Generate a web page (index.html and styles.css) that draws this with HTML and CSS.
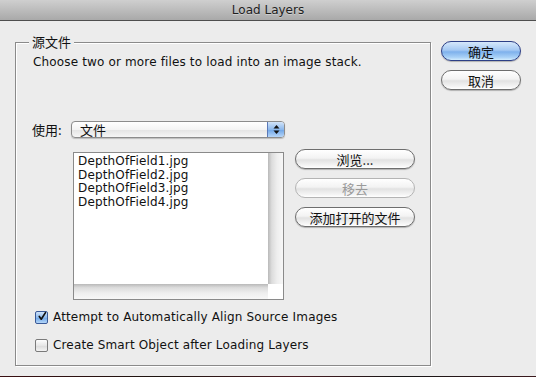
FILE: index.html
```html
<!DOCTYPE html>
<html lang="zh">
<head>
    <meta charset="UTF-8">
    <title>Load Layers</title>
    <link rel="stylesheet" href="styles.css">
</head>
<body>
    <div class="window">
        <div class="titlebar">Load Layers</div>
        <div class="dialog">
            <div class="group">
                <span class="group-title">源文件</span>
                <p class="desc">Choose two or more files to load into an image stack.</p>
                <div class="use-row">
                    <span class="use-label">使用:</span>
                    <div class="popup">
                        <span class="popup-text">文件</span>
                        <span class="popup-arrows">
                            <svg width="7" height="11" viewBox="0 0 7 11">
                                <path d="M3.5 1 L6.5 4.5 L0.5 4.5 Z" fill="#111"/>
                                <path d="M0.5 6.5 L6.5 6.5 L3.5 10 Z" fill="#111"/>
                            </svg>
                        </span>
                    </div>
                </div>
                <div class="files-row">
                    <div class="file-list">
                        <ul class="file-items">
                            <li>DepthOfField1.jpg</li>
                            <li>DepthOfField2.jpg</li>
                            <li>DepthOfField3.jpg</li>
                            <li>DepthOfField4.jpg</li>
                        </ul>
                        <div class="vtrack"></div>
                        <div class="htrack"></div>
                        <div class="corner"></div>
                    </div>
                    <div class="file-buttons">
                        <button class="btn">浏览...</button>
                        <button class="btn disabled">移去</button>
                        <button class="btn">添加打开的文件</button>
                    </div>
                </div>
                <div class="checks">
                    <label class="check">
                        <span class="box checked">
                            <svg width="13" height="13" viewBox="0 0 13 13">
                                <path d="M3 6.5 L5.5 10 L11 1.5" fill="none" stroke="#111" stroke-width="2.2" stroke-linecap="round" stroke-linejoin="round"/>
                            </svg>
                        </span>
                        Attempt to Automatically Align Source Images
                    </label>
                    <label class="check">
                        <span class="box"></span>
                        Create Smart Object after Loading Layers
                    </label>
                </div>
            </div>
            <div class="side-buttons">
                <button class="btn side default">确定</button>
                <button class="btn side">取消</button>
            </div>
        </div>
        <div class="desktop"></div>
    </div>
</body>
</html>
```

FILE: styles.css
```css
:root {
    --bg-color: #ececec;
    --line-color: #8a8a8a;
    --text-color: #111;
    --font-main: 'DejaVu Sans', 'Noto Sans CJK SC', sans-serif;
    --font-cjk: 'Noto Sans CJK SC', sans-serif;
}

html, body {
    margin: 0;
    padding: 0;
    width: 536px;
    height: 377px;
    overflow: hidden;
    background: #2a1414;
    font-family: var(--font-main);
    color: var(--text-color);
}

.window {
    display: flex;
    flex-direction: column;
    height: 377px;
}

.titlebar {
    height: 20px;
    line-height: 20px;
    text-align: center;
    font-size: 12px;
    color: #1e1e1e;
    text-shadow: 0 1px 0 rgba(255, 255, 255, 0.35);
    background: linear-gradient(#cfcfcf, #a9a9a9);
    border-bottom: 1px solid #4e4e4e;
}

.dialog {
    display: flex;
    align-items: flex-start;
    gap: 10px;
    height: 355px;
    background: var(--bg-color);
    padding-left: 15px;
    box-sizing: border-box;
}

.desktop {
    height: 1px;
    background: linear-gradient(90deg, #3a0f12, #1c1410 30%, #4a1c22 55%, #151515 75%, #3b1a1e);
}

/* group box */
.group {
    position: relative;
    margin-top: 21px;
    width: 416px;
    height: 324px;
    box-sizing: border-box;
    border: 1px solid var(--line-color);
    box-shadow: 1px 1px 0 #fff, inset 1px 1px 0 #fff;
    padding: 12px 0 0 16px;
}

.group-title {
    position: absolute;
    top: -10px;
    left: 13px;
    padding: 0 3px 0 3px;
    background: var(--bg-color);
    font-family: var(--font-cjk);
    font-size: 13px;
    line-height: 17px;
}

.desc {
    margin: 0 0 0 1px;
    font-size: 12px;
    letter-spacing: 0.15px;
    line-height: 15px;
}

.use-row {
    display: flex;
    align-items: center;
    margin-top: 50px;
    height: 18px;
}

.use-label {
    font-family: var(--font-cjk);
    font-size: 13px;
    width: 39px;
}

.popup {
    display: flex;
    width: 214px;
    height: 17px;
    box-sizing: border-box;
    border: 1px solid #8c8c8c;
    border-radius: 4px;
    overflow: hidden;
    background: linear-gradient(#fff, #f4f4f4 50%, #e4e4e4 52%, #f6f6f6);
    box-shadow: 0 1px 1px rgba(0, 0, 0, 0.2);
}

.popup-text {
    flex: 1;
    padding-left: 8px;
    font-family: var(--font-cjk);
    font-size: 13px;
    line-height: 15px;
}

.popup-arrows {
    width: 16px;
    display: flex;
    align-items: center;
    justify-content: center;
    border-left: 1px solid #5b79b8;
    background: linear-gradient(#d2e4f9, #8cb8ec 50%, #6ea5e7 52%, #b7d6f8);
}

/* file list */
.files-row {
    display: flex;
    align-items: flex-start;
    margin-top: 14px;
}

.file-list {
    display: grid;
    grid-template-columns: 1fr 15px;
    grid-template-rows: 1fr 15px;
    width: 211px;
    height: 148px;
    margin-left: 41px;
    box-sizing: border-box;
    border: 1px solid var(--line-color);
    background: #fff;
}

.file-items {
    list-style: none;
    margin: 0;
    padding: 2px 0 0 4px;
    font-size: 12px;
    letter-spacing: 0.15px;
    line-height: 13.5px;
}

.vtrack {
    background: linear-gradient(90deg, #b9b9b9, #dcdcdc 25%, #eeeeee 60%, #f7f7f7);
}

.htrack {
    background: linear-gradient(#b9b9b9, #dcdcdc 25%, #eeeeee 60%, #f7f7f7);
}

.corner {
    background: #fff;
}

.file-buttons {
    display: flex;
    flex-direction: column;
    gap: 9px;
    margin-left: 11px;
    margin-top: -3px;
}

/* aqua buttons */
.btn {
    display: block;
    width: 120px;
    height: 20px;
    padding: 0;
    border: 1px solid #6e6e6e;
    border-radius: 10px;
    background: linear-gradient(#ffffff, #f3f3f3 45%, #e2e2e2 55%, #f4f4f4 85%, #ffffff);
    box-shadow: 0 1px 1px rgba(0, 0, 0, 0.25);
    font-family: var(--font-cjk);
    font-size: 13px;
    line-height: 17px;
    color: #111;
}

.btn.disabled {
    color: #9a9a9a;
    border-color: #b4b4b4;
    box-shadow: none;
}

.btn.side {
    width: 80px;
}

.btn.default {
    border-color: #2d3f86;
    background: linear-gradient(#d6e8fb, #a5c9f3 45%, #7eb1ec 55%, #a9d1f7 85%, #d2ecfd);
}

.side-buttons {
    display: flex;
    flex-direction: column;
    gap: 9px;
    margin-top: 20px;
}

/* checkboxes */
.checks {
    display: flex;
    flex-direction: column;
    gap: 14px;
    margin-top: 10px;
    margin-left: 3px;
}

.check {
    display: flex;
    align-items: center;
    gap: 5px;
    height: 14px;
    font-size: 12px;
    letter-spacing: 0.15px;
}

.box {
    width: 13px;
    height: 13px;
    box-sizing: border-box;
    border: 1px solid #7a7a7a;
    border-radius: 2px;
    background: linear-gradient(#fdfdfd, #e6e6e6 50%, #dadada 52%, #f3f3f3);
    display: flex;
    align-items: center;
    justify-content: center;
    overflow: visible;
}

.box.checked {
    border-color: #3a5a98;
    background: linear-gradient(#cfe3fa, #8ebbee 50%, #6ea6e8 52%, #b4d6f8);
}

.box svg {
    margin-top: -2px;
    margin-left: 1px;
}
```
